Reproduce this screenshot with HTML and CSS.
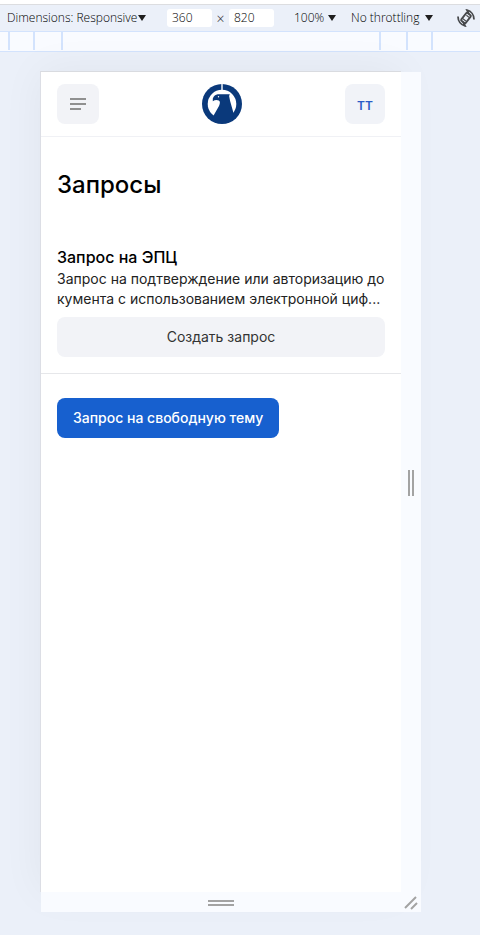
FILE: index.html
```html
<!DOCTYPE html>
<html lang="ru">
<head>
<meta charset="utf-8">
<meta name="viewport" content="width=device-width, initial-scale=1">
<title>Запросы</title>
<link rel="stylesheet" href="styles.css">
</head>
<body>
<div class="toolbar">
  <label class="picker picker-device">
    <select aria-label="Dimensions"><option>Dimensions: Responsive</option></select>
    <svg class="caret" viewBox="0 0 8 6" aria-hidden="true"><path d="M0 0h8L4 6z"/></svg>
  </label>
  <div class="size">
    <input type="text" value="360" aria-label="Width">
    <span class="times">×</span>
    <input type="text" value="820" aria-label="Height">
  </div>
  <label class="picker picker-zoom">
    <select aria-label="Zoom"><option>100%</option></select>
    <svg class="caret" viewBox="0 0 8 6" aria-hidden="true"><path d="M0 0h8L4 6z"/></svg>
  </label>
  <label class="picker picker-network">
    <select aria-label="Throttling"><option>No throttling</option></select>
    <svg class="caret" viewBox="0 0 8 6" aria-hidden="true"><path d="M0 0h8L4 6z"/></svg>
  </label>
  <button class="rotate" type="button" aria-label="Rotate">
    <svg viewBox="0 0 18 18" fill="none" stroke="#46484b" stroke-width="1.800" aria-hidden="true">
      <rect x="6.200" y="4" width="5.600" height="10" rx="1" transform="rotate(38 9 9)"/>
      <path d="M9.400 6.200l3 2.400M5.800 9.600l3 2.400" stroke-width="1.200"/>
      <path d="M1 7.500c0 4.600 2.800 8.400 7 9.300l-2-4M17 10.500C17 5.900 14.200 2.100 10 1.200l2 4"/>
    </svg>
  </button>
</div>
<div class="ruler"><span></span><span></span><span></span><span></span><span></span><span></span><span></span></div>

<div class="stage">
  <div class="frame">
    <div class="screen">
      <header class="header">
        <button class="menu" type="button" aria-label="Меню">
          <svg viewBox="0 0 16 12" aria-hidden="true"><path d="M0 0h16v2H0zM0 5h16v2H0zM0 10h11v2H0z"/></svg>
        </button>
        <svg class="logo" viewBox="0 0 40 40" aria-hidden="true">
          <circle cx="20" cy="20" r="20" fill="#0a397b"/>
          <circle cx="20" cy="20" r="14.300" fill="#fff"/>
          <path d="M19.300 0h1.400v7h-1.400z" fill="#fff"/>
          <path d="M10.800 17.200v-2.700c1-2.600 2.600-3.900 5-4.200l12-.1-.7 1.800 1 5 3.600 12.800L30 36H10l2-5.300 5-8.700c1.300-2.800 1.200-4.700-.2-5.500-1.900-1-4.200-.6-6 .7z" fill="#0a397b"/>
          <circle cx="16.500" cy="12.800" r=".7" fill="#fff"/>
        </svg>
        <button class="user" type="button">ТТ</button>
      </header>
      <main>
        <h1>Запросы</h1>
        <section class="request">
          <h2>Запрос на ЭПЦ</h2>
          <p>Запрос на подтверждение или авторизацию документа с использованием электронной циф...</p>
          <button class="create" type="button">Создать запрос</button>
        </section>
        <button class="free" type="button">Запрос на свободную тему</button>
      </main>
    </div>
    <div class="grip grip-right"><svg width="6" height="26" aria-hidden="true"><path d="M0 0h2v26H0zM4 0h2v26H4z"/></svg></div>
    <div class="grip grip-bottom"><svg width="26" height="6" aria-hidden="true"><path d="M0 0h26v2H0zM0 4h26v2H0z"/></svg></div>
    <div class="grip"><svg width="14" height="14" aria-hidden="true"><path d="M1 12L12 1M7 13l6-6" fill="none" stroke="#a3a3a3" stroke-width="2"/></svg></div>
  </div>
</div>
</body>
</html>
```
FILE: styles.css
```css
* { box-sizing: border-box; }

body {
  margin: 0;
  padding-top: 4px;
  min-height: 100vh;
  display: flex;
  flex-direction: column;
  background: #fff;
  font-family: Inter, sans-serif;
  color: #000;
}

button, input, select { font: inherit; color: inherit; border: 0; margin: 0; padding: 0; }
svg { display: block; }
h1, h2, p { margin: 0; }

.toolbar {
  display: flex;
  align-items: center;
  height: 28px;
  padding: 0 5px 0 7px;
  border-top: 1px solid #dcdde0;
  border-bottom: 1px solid #d3e3fd;
  background: #ebf0f9;
  color: #000;
  font: 300 12px/18px "Open Sans", sans-serif;
}
.picker { display: flex; align-items: center; justify-content: space-between; }
.picker select { appearance: none; background: none; white-space: nowrap; }
.caret { width: 8px; height: 6px; flex: none; fill: #1f1f1f; }
.picker-device { width: 139px; margin-right: 21px; }
.picker-zoom { width: 42px; margin: 0 15px 0 20px; }
.picker-network { width: 82px; }
.size { display: flex; align-items: center; }
.size input {
  width: 45px;
  height: 18px;
  padding: 0 5px;
  border-radius: 3px;
  background: #fff;
}
.times { width: 17px; padding-top: 2px; text-align: center; font-size: 14px; color: #333; }
.rotate { margin-left: auto; background: none; }
.rotate svg { width: 18px; height: 18px; }

.ruler {
  display: grid;
  grid-template-columns: 8px 25px 28px 1fr 27px 25px 49px;
  height: 20px;
  padding-bottom: 1px;
  border-bottom: 1px solid #d3e3fd;
  background: #f9fbff;
}
.ruler span + span { border-left: 2px solid #d3e3fd; }

.stage {
  flex: 1;
  display: flex;
  padding: 19px 59px 23px 40px;
  background: #ebf0f9;
}
.frame {
  flex: 1;
  display: grid;
  grid-template: 1fr 20px / 1fr 20px;
}
.screen {
  background: #fff;
  border-top: 1px solid #d9dbe0;
  border-left: 1px solid #dcdee5;
  box-shadow: 0 0 40px rgba(0, 0, 0, .05);
  min-width: 0;
}
.grip {
  position: relative;
  display: flex;
  align-items: center;
  justify-content: center;
  padding-top: 2px;
  background: #f9fbff;
  fill: #a3a3a3;
}
.grip-right { margin-top: 1px; }
.grip-bottom { margin-left: 1px; }

.header {
  display: flex;
  align-items: center;
  justify-content: space-between;
  padding: 12px 16px;
  border-bottom: 1px solid #f0f1f5;
}
.menu, .user {
  display: flex;
  align-items: center;
  justify-content: center;
  height: 40px;
  border-radius: 8px;
  background: #f2f3f7;
}
.menu { width: 42px; }
.menu svg { width: 16px; height: 12px; fill: #909090; }
.logo { width: 40px; height: 40px; }
.user { width: 40px; padding-top: 2px; background: #f1f3f8; color: #2a5bc7; font-size: 12px; font-weight: 600; }

h1 {
  padding: 32px 16px;
  font-size: 24px;
  line-height: 32px;
  font-weight: 500;
}
.request { padding: 14px 16px 16px; border-bottom: 1px solid #e6e7ea; }
h2 { font-size: 16px; line-height: 20px; font-weight: 500; padding-bottom: 2px; }
.request p {
  font-size: 14px;
  line-height: 20px;
  word-break: break-all;
  color: #222;
}
.create, .free {
  height: 40px;
  padding: 0 16px 2px;
  border-radius: 8px;
  font-size: 14px;
}
.create {
  width: 100%;
  margin-top: 8px;
  background: #f2f3f7;
  color: #333;
}
.free {
  margin: 24px 16px;
  background: #1760cf;
  color: #fff;
  font-weight: 500;
}
```
